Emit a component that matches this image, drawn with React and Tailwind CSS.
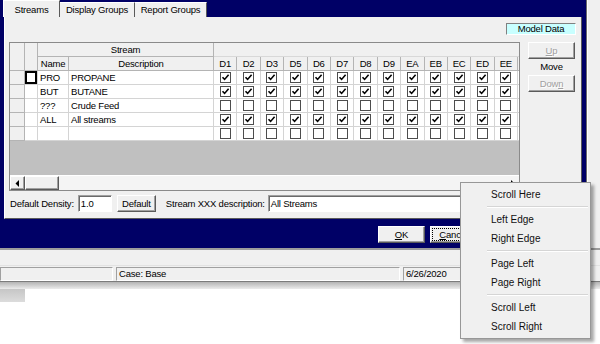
import React from "react";

const cols = ["D1", "D2", "D3", "D5", "D6", "D7", "D8", "D9", "EA", "EB", "EC", "ED", "EE"];

const rows = [
  { name: "PRO", desc: "PROPANE", on: true, focus: true },
  { name: "BUT", desc: "BUTANE", on: true },
  { name: "???", desc: "Crude Feed", on: false },
  { name: "ALL", desc: "All streams", on: true },
  { name: "", desc: "", on: false },
];

const gridCols = "grid grid-cols-[15px_13px_31px_145px_repeat(13,23.4px)_1fr]";

function Check({ on }) {
  return (
    <div className="w-[11px] h-[11px] border border-[#4d4d4d] bg-white flex items-center justify-center">
      {on && (
        <svg width="9" height="9" viewBox="0 0 9 9">
          <path d="M1.5 4.2 L3.6 6.4 L7.6 1.8" fill="none" stroke="#000" strokeWidth="1.6" />
        </svg>
      )}
    </div>
  );
}

function Btn({ children, className = "" }) {
  return (
    <div
      className={
        "bg-[#f0f0f0] border border-t-white border-l-white border-r-[#5a5a5a] border-b-[#5a5a5a] shadow-[inset_-1px_-1px_0_#a0a0a0] flex items-center justify-center " +
        className
      }
    >
      {children}
    </div>
  );
}

function Sunken({ children, className = "" }) {
  return (
    <div
      className={
        "border border-t-[#a0a0a0] border-l-[#a0a0a0] border-r-white border-b-white shadow-[inset_1px_1px_0_#6a6a6a] flex items-center " +
        className
      }
    >
      {children}
    </div>
  );
}

function MenuItem({ children }) {
  return <div className="h-[19px] pl-[30px] flex items-center">{children}</div>;
}

function Sep() {
  return (
    <div className="h-[6px] ml-[26px] mr-[2px] flex flex-col justify-center">
      <div className="h-px bg-[#d5d5d5]" />
      <div className="h-px bg-white" />
    </div>
  );
}

export default function App() {
  return (
    <div className="w-[600px] h-[344px] bg-white relative overflow-hidden text-black text-[9.5px] tracking-[-0.2px] leading-none font-['Liberation_Sans',Arial,sans-serif]">
      <div className="flex h-[248px]">
        {/* dialog */}
        <div className="w-[586px] bg-[#000066] flex flex-col px-[4px]">
          {/* tabs */}
          <div className="h-[17px] flex items-end">
            <div className="h-[17px] w-[57px] -ml-[1px] bg-[#f0f0f0] border-t border-l border-white border-r border-r-[#5a5a5a] flex items-center justify-center pt-[1px]">
              Streams
            </div>
            <div className="h-[15px] w-[75px] bg-[#f0f0f0] border-t border-white border-r border-r-[#5a5a5a] flex items-center justify-center">
              Display Groups
            </div>
            <div className="h-[15px] w-[72px] bg-[#f0f0f0] border-t border-white border-r border-r-[#5a5a5a] flex items-center justify-center">
              Report Groups
            </div>
          </div>

          {/* panel */}
          <div className="h-[202px] bg-[#f0f0f0] border-l border-l-white border-r border-b border-[#5a5a5a] flex flex-col pl-[4px] pr-[5px] pt-[6px]">
            <div className="flex justify-end">
              <div className="w-[70px] h-[12px] bg-[#c8ffff] border border-t-[#808080] border-l-[#808080] border-r-white border-b-white flex items-center justify-center">
                Model Data
              </div>
            </div>

            <div className="flex mt-[7px]">
              {/* grid */}
              <div className="w-[511px] h-[149px] border border-[#8a8a8a] bg-white flex flex-col">
                <div className={gridCols + " grid-rows-[14px_14px] bg-[#f0f0f0]"}>
                  <div className="row-span-2 border-r border-b border-[#b4b4b4]" />
                  <div className="row-span-2 border-r border-b border-[#b4b4b4]" />
                  <div className="col-span-2 border-r border-b border-[#b4b4b4] flex items-center justify-center">
                    Stream
                  </div>
                  <div className="col-span-14 border-b border-[#d8d8d8]" />
                  <div className="border-r border-b border-[#b4b4b4] flex items-center justify-center">Name</div>
                  <div className="border-r border-b border-[#b4b4b4] flex items-center justify-center">Description</div>
                  {cols.map((c) => (
                    <div key={c} className="border-r border-b border-[#b4b4b4] flex items-center justify-center">
                      {c}
                    </div>
                  ))}
                  <div className="border-b border-[#b4b4b4]" />
                </div>

                {rows.map((r, i) => (
                  <div key={i} className={gridCols + " h-[14px]"}>
                    <div className="bg-[#f0f0f0] border-r border-b border-[#b4b4b4]" />
                    <div className="bg-white border-r border-b border-[#d4d4d4]">
                      {r.focus && <div className="w-full h-full border-2 border-black" />}
                    </div>
                    <div className="border-r border-b border-[#d4d4d4] flex items-center pl-[2px]">{r.name}</div>
                    <div className="border-r border-b border-[#d4d4d4] flex items-center pl-[2px]">{r.desc}</div>
                    {cols.map((c) => (
                      <div key={c} className="border-r border-b border-[#d4d4d4] flex items-center justify-center">
                        <Check on={r.on} />
                      </div>
                    ))}
                    <div className="border-b border-[#d4d4d4]" />
                  </div>
                ))}

                <div className="h-[34px] bg-[#c0c0c0]" />

                {/* scrollbar */}
                <div className="flex-1 flex bg-[#f4f4f4] border-t border-white">
                  <Btn className="w-[15px]">
                    <svg width="5" height="7" viewBox="0 0 5 7">
                      <path d="M4 0 L0.5 3.5 L4 7 Z" fill="#000" />
                    </svg>
                  </Btn>
                  <Btn className="w-[34px]" />
                  <div className="flex-1" />
                  <div className="w-[14px] flex items-center justify-center">
                    <svg width="5" height="7" viewBox="0 0 5 7">
                      <path d="M1 0 L4.5 3.5 L1 7 Z" fill="#000" />
                    </svg>
                  </div>
                </div>
              </div>

              {/* side buttons */}
              <div className="ml-[8px] w-[47px] flex flex-col items-center">
                <Btn className="w-[47px] h-[17px] text-[#a0a0a0] [text-shadow:1px_1px_0_#fff]">
                  <span><span className="underline">U</span>p</span>
                </Btn>
                <div className="h-[16px] flex items-center justify-center">Move</div>
                <Btn className="w-[47px] h-[17px] text-[#a0a0a0] [text-shadow:1px_1px_0_#fff]">
                  <span>Dow<span className="underline">n</span></span>
                </Btn>
              </div>
            </div>

            {/* bottom row */}
            <div className="flex items-center mt-[4px] h-[17px]">
              <span className="ml-[1px]">Default Density:</span>
              <Sunken className="ml-[4px] w-[34px] h-[17px] bg-white pl-[2px]">1.0</Sunken>
              <Btn className="ml-[5px] w-[39px] h-[17px]">Default</Btn>
              <span className="ml-[10px]">Stream XXX description:</span>
              <Sunken className="ml-[3px] w-[250px] h-[17px] bg-white pl-[2px]">All Streams</Sunken>
            </div>
          </div>

          {/* OK / Cancel */}
          <div className="flex mt-[7px] ml-[374px]">
            <Btn className="w-[47px] h-[17px]">
              <span><span className="underline">O</span>K</span>
            </Btn>
            <Btn className="ml-[5px] w-[47px] h-[17px]">
              <span className="border border-dotted border-black px-[6px] py-[1px]">
                <span className="underline">C</span>ancel
              </span>
            </Btn>
          </div>
        </div>

        {/* right strip */}
        <div className="flex-1 bg-[#f0f0f0] border-l border-[#6a6a6a] shadow-[inset_1px_0_0_#ffffff]" />
      </div>

      {/* status area */}
      <div className="h-[33px] bg-[#f0f0f0] border-t-2 border-[#9c9c9c] flex flex-col">
        <div className="h-[16px] border-b border-[#e2e2e2]" />
        <div className="flex flex-1 pt-[1px]">
          <Sunken className="w-[113px] h-[14px] shadow-none" />
          <Sunken className="ml-[3px] w-[284px] h-[14px] shadow-none pl-[2px]">Case: Base</Sunken>
          <Sunken className="ml-[3px] w-[80px] h-[14px] shadow-none pl-[2px]">6/26/2020</Sunken>
        </div>
      </div>
      <div className="h-[1px] bg-[#7c7c7c]" />
      <div className="h-[7px] bg-gradient-to-b from-[#b4b4b4] to-[#ececec]" />
      <div className="w-[25px] h-[13px] bg-gradient-to-b from-[#c6c6c6] to-[#dcdcdc]" />

      {/* context menu */}
      <div className="absolute left-[460px] top-[182px] w-[131px] bg-[#f0f0f0] border border-[#979797] shadow-[3px_3px_3px_rgba(0,0,0,0.35)] py-[2px] text-[10px] tracking-normal text-[#111]">
        <MenuItem>Scroll Here</MenuItem>
        <Sep />
        <MenuItem>Left Edge</MenuItem>
        <MenuItem>Right Edge</MenuItem>
        <Sep />
        <MenuItem>Page Left</MenuItem>
        <MenuItem>Page Right</MenuItem>
        <Sep />
        <MenuItem>Scroll Left</MenuItem>
        <MenuItem>Scroll Right</MenuItem>
      </div>
    </div>
  );
}
